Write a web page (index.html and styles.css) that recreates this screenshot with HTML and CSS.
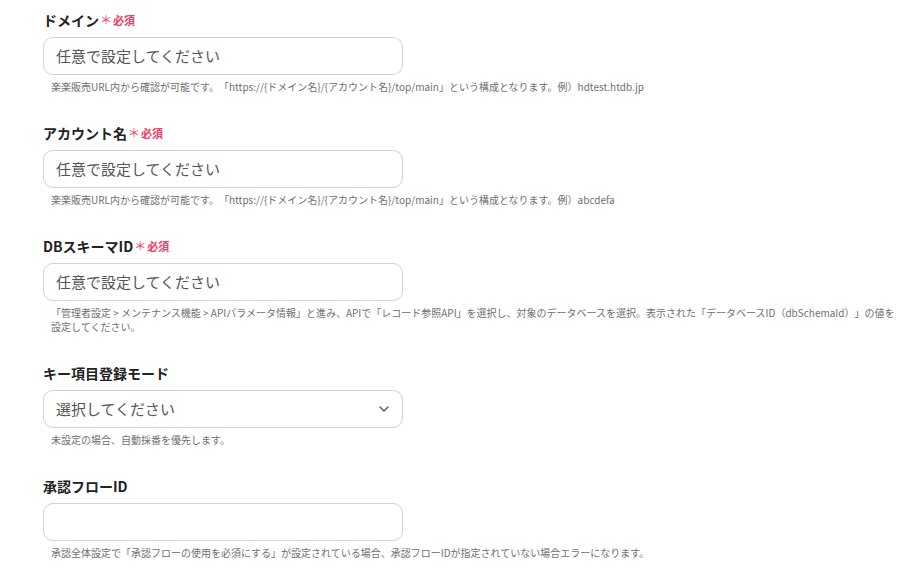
FILE: index.html
```html
<!DOCTYPE html>
<html lang="ja">
<head>
<meta charset="utf-8">
<link rel="stylesheet" href="styles.css">
</head>
<body>
<div class="form">
  <div class="field">
    <div class="label">ドメイン<span class="req"><span class="star">＊</span>必須</span></div>
    <div class="input placeholder">任意で設定してください</div>
    <div class="hint">楽楽販売URL内から確認が可能です。「https://{ドメイン名}/{アカウント名}/top/main」という構成となります。例）hdtest.htdb.jp</div>
  </div>
  <div class="field">
    <div class="label">アカウント名<span class="req"><span class="star">＊</span>必須</span></div>
    <div class="input placeholder">任意で設定してください</div>
    <div class="hint">楽楽販売URL内から確認が可能です。「https://{ドメイン名}/{アカウント名}/top/main」という構成となります。例）abcdefa</div>
  </div>
  <div class="field">
    <div class="label">DBスキーマID<span class="req"><span class="star">＊</span>必須</span></div>
    <div class="input placeholder">任意で設定してください</div>
    <div class="hint">「管理者設定 &gt; メンテナンス機能 &gt; APIパラメータ情報」と進み、APIで「レコード参照API」を選択し、対象のデータベースを選択。表示された「データベースID（dbSchemaId）」の値を設定してください。</div>
  </div>
  <div class="field">
    <div class="label">キー項目登録モード</div>
    <div class="input select placeholder"><span>選択してください</span>
      <svg class="chev" width="12" height="8" viewBox="0 0 12 8"><path d="M2 2 L6 6 L10 2" fill="none" stroke="#666" stroke-width="1.6" stroke-linecap="round" stroke-linejoin="round"/></svg>
    </div>
    <div class="hint">未設定の場合、自動採番を優先します。</div>
  </div>
  <div class="field">
    <div class="label">承認フローID</div>
    <div class="input"></div>
    <div class="hint">承認全体設定で「承認フローの使用を必須にする」が設定されている場合、承認フローIDが指定されていない場合エラーになります。</div>
  </div>
</div>
</body>
</html>
```
FILE: styles.css
```css
html, body {
  margin: 0;
  padding: 0;
  background: #ffffff;
}
body {
  font-family: "Noto Sans CJK JP", "Noto Sans", sans-serif;
  color: #222;
  text-spacing-trim: space-all;
}
.form {
  padding: 10px 20px 0 43px;
  display: flex;
  flex-direction: column;
  gap: 29px;
}
.field {
  display: flex;
  flex-direction: column;
}
.label {
  font-size: 14px;
  font-weight: 700;
  line-height: 20px;
  color: #222;
  display: flex;
  align-items: center;
}
.req {
  color: #ee3b5f;
  font-size: 11px;
  font-weight: 700;
  margin-left: 1px;
  display: inline-flex;
  align-items: center;
}
.star {
  font-size: 12px;
  font-weight: 400;
  margin-right: 1px;
}
.input {
  margin-top: 7px;
  box-sizing: border-box;
  width: 360px;
  height: 38px;
  border: 1px solid #cfd2d8;
  border-radius: 10px;
  padding: 0 12px;
  font-size: 15px;
  line-height: 36px;
  color: #444;
}
.placeholder {
  color: #555;
}
.select {
  display: flex;
  align-items: center;
  justify-content: space-between;
}
.hint {
  margin-top: 5px;
  padding-left: 8px;
  font-size: 10px;
  line-height: 14px;
  color: #6f6f6f;
}
```
